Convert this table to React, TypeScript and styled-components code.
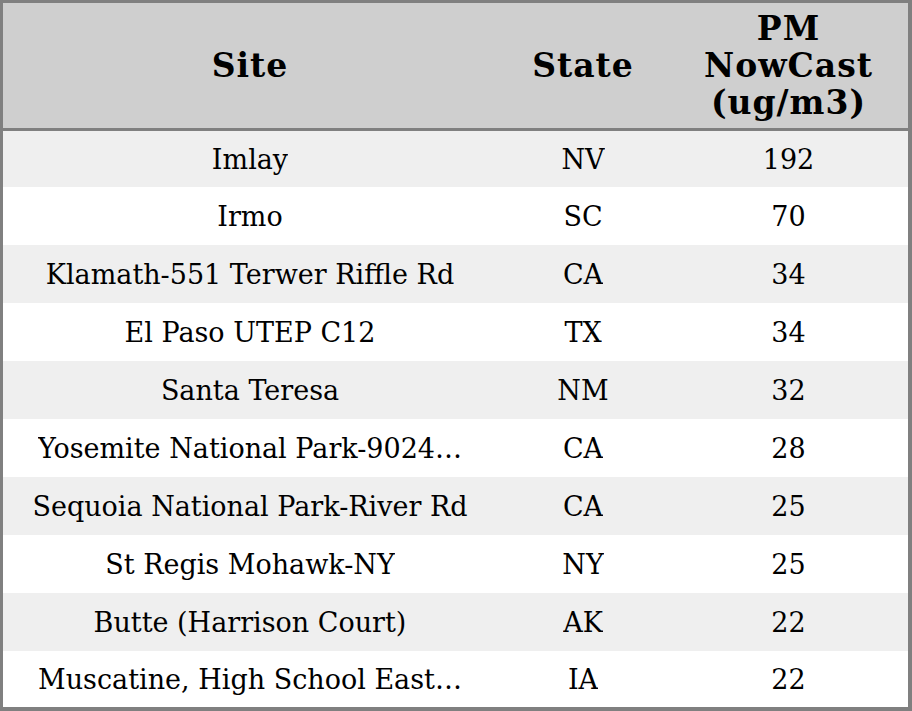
import React from "react";
import styled, { createGlobalStyle } from "styled-components";

const Global = createGlobalStyle`
  html, body { margin: 0; padding: 0; background: #ffffff; }
  body { font-family: "DejaVu Serif", serif; color: #000; }
`;

const Table = styled.div`
  width: 912px;
  height: 711px;
  box-sizing: border-box;
  border-style: solid;
  border-color: #808080;
  border-width: 3px 4px 4px 3px;
  display: grid;
  grid-template-columns: 494px 172px 1fr;
  grid-template-rows: 128px 56px repeat(8, 58px) 56px;
  overflow: hidden;
`;

const HeadCell = styled.div`
  background: #cfcfcf;
  border-bottom: 3px solid #808080;
  display: flex;
  align-items: center;
  justify-content: center;
  text-align: center;
  font-weight: bold;
  font-size: 33px;
  letter-spacing: 1px;
  line-height: 37px;
  padding-bottom: 1px;
`;

const Cell = styled.div<{ $alt: boolean }>`
  background: ${(p) => (p.$alt ? "#efefef" : "#ffffff")};
  display: flex;
  align-items: center;
  justify-content: center;
  font-size: 27px;
  min-width: 0;
  padding: 1px 8px 0;
  box-sizing: border-box;
`;

const Text = styled.span`
  white-space: nowrap;
  overflow: hidden;
  text-overflow: ellipsis;
  max-width: 100%;
`;

const rows: [string, string, string][] = [
  ["Imlay", "NV", "192"],
  ["Irmo", "SC", "70"],
  ["Klamath-551 Terwer Riffle Rd", "CA", "34"],
  ["El Paso UTEP C12", "TX", "34"],
  ["Santa Teresa", "NM", "32"],
  ["Yosemite National Park-9024\u2026", "CA", "28"],
  ["Sequoia National Park-River Rd", "CA", "25"],
  ["St Regis Mohawk-NY", "NY", "25"],
  ["Butte (Harrison Court)", "AK", "22"],
  ["Muscatine, High School East\u2026", "IA", "22"],
];

export default function App() {
  return (
    <>
      <Global />
      <Table>
        <HeadCell>Site</HeadCell>
        <HeadCell>State</HeadCell>
        <HeadCell>
          PM
          <br />
          NowCast
          <br />
          (ug/m3)
        </HeadCell>
        {rows.map((r, i) =>
          r.map((v, j) => (
            <Cell key={`${i}-${j}`} $alt={i % 2 === 0}>
              <Text>{v}</Text>
            </Cell>
          ))
        )}
      </Table>
    </>
  );
}
